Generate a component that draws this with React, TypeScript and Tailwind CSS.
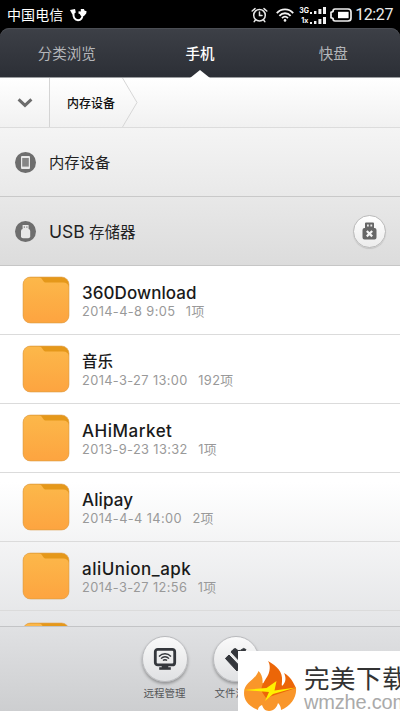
import React from 'react';

interface FolderItem {
  name: string;
  date: string;
  count: string;
  nameClass: string;
}

const folders: FolderItem[] = [
  { name: '360Download', date: '2014-4-8 9:05', count: '1项', nameClass: 'text-[17px] tracking-[0.08px]' },
  { name: '音乐', date: '2014-3-27 13:00', count: '192项', nameClass: 'text-[15.5px]' },
  { name: 'AHiMarket', date: '2013-9-23 13:32', count: '1项', nameClass: 'text-[17px] tracking-[0.5px]' },
  { name: 'Alipay', date: '2014-4-4 14:00', count: '2项', nameClass: 'text-[17px] tracking-[0.1px]' },
  { name: 'aliUnion_apk', date: '2014-3-27 12:56', count: '1项', nameClass: 'text-[17px] tracking-[0.5px]' },
];

const FolderIcon: React.FC = () => (
  <svg width="48" height="48" viewBox="0 0 48 48" className="shrink-0">
    <defs>
      <linearGradient id="folder" x1="0" y1="0" x2="0" y2="1">
        <stop offset="0" stopColor="#fcb84a" />
        <stop offset="1" stopColor="#fda440" />
      </linearGradient>
    </defs>
    <rect x="1" y="1" width="46" height="46" rx="7.5" fill="#e5981a" />
    <path
      d="M8.5 1.4H17C18.8 1.4 19.4 2.2 20.4 3.8C21.6 5.8 22.4 6.6 24.3 6.6H41C44.5 6.6 46.4 8.2 46.8 11V39.5C46.8 44 44 46.8 39.5 46.8H8.5C4 46.8 1.2 44 1.2 39.5V8.5C1.2 4 4 1.4 8.5 1.4Z"
      fill="url(#folder)"
    />
    <rect x="1" y="1" width="46" height="46" rx="7.5" fill="none" stroke="#e0a458" strokeOpacity="0.6" />
  </svg>
);

const SignalBars: React.FC = () => (
  <svg width="17" height="7" viewBox="0 0 17 7" fill="#f2f2f2">
    <rect x="0" y="5" width="2" height="2" />
    <rect x="4" y="4" width="2.4" height="3" />
    <rect x="8.4" y="2" width="3" height="5" />
    <rect x="13" y="0" width="3" height="7" />
  </svg>
);

const StatusBar: React.FC = () => (
  <div className="flex h-7 items-center bg-black px-[7px] pt-0.5 text-white">
    <span className="text-[14px] leading-none tracking-[0.1px]">中国电信</span>
    <svg width="18" height="16" viewBox="0 0 18 16" className="ml-1.5">
      <path d="M4.5 6C4 10.5 6 13.2 9 13.2C12 13.2 13.6 10.8 13.4 8" fill="none" stroke="#fff" strokeWidth="2" />
      <path d="M1 3L6 2L6.8 5.4L3.4 7.6Z" fill="#fff" />
      <path d="M9.6 4.2L11.8 4.4V2H15L15.4 3.6L17.6 4.2L17.2 6.6L15 9H12L10.8 7L9.4 6.4Z" fill="#fff" />
    </svg>
    <div className="ml-auto flex items-center">
      <svg width="18" height="16" viewBox="0 0 18 16" fill="none" stroke="#e8e8e8" strokeWidth="1.5" strokeLinecap="round">
        <circle cx="8.5" cy="8.2" r="5.8" />
        <path d="M8.5 5V8.5H11M1.2 4L4 1.6M13 1.6L15.8 4M4.4 13L3.2 14.6M12.6 13L13.8 14.6" />
      </svg>
      <svg width="18" height="14" viewBox="0 0 18 14" fill="none" stroke="#f2f2f2" strokeWidth="1.8" className="ml-[7px]">
        <path d="M0.8 5.2C5.2 0.2 12.8 0.2 17.2 5.2" />
        <path d="M3.4 7.8C6.4 4.4 11.6 4.4 14.6 7.8" />
        <path d="M6 10.2C7.8 8.2 10.2 8.2 12 10.2" />
        <circle cx="9" cy="12.4" r="1.3" fill="#f2f2f2" stroke="none" />
      </svg>
      <div className="ml-[5px] flex w-7 flex-col gap-[3px]">
        <div className="flex h-[7px] items-end">
          <span className="w-[11px] font-['Inter'] text-[7px] font-bold leading-[7px]">3G</span>
          <SignalBars />
        </div>
        <div className="flex h-[7px] items-end">
          <span className="w-[11px] pl-0.5 font-['Inter'] text-[7px] font-bold leading-[7px]">1x</span>
          <SignalBars />
        </div>
      </div>
      <svg width="22" height="14" viewBox="0 0 22 14" className="ml-[3px]">
        <path d="M5 1H18C20 1 21 2 21 4V10C21 12 20 13 18 13H5C3.4 13 3 12 3 10.6L1 9.6V4.4L3 3.4C3 2 3.4 1 5 1Z" fill="none" stroke="#eee" strokeWidth="1.7" />
        <rect x="8" y="3.8" width="10.6" height="6.4" fill="#fff" />
      </svg>
      <span className="ml-[3px] font-['Roboto'] text-[16px] leading-none tracking-[-0.4px] text-[#ececec]">12:27</span>
    </div>
  </div>
);

const Tabs: React.FC = () => (
  <div className="bg-black">
    <div className="relative grid h-[50px] grid-cols-3 rounded-t-[9px] border-b border-[#9b9da0] bg-linear-to-b from-[#3d4047] to-[#2c2f36] text-center text-[14.5px] leading-[51px] text-[#b4b6ba] shadow-[inset_0_1px_0_#4b4e54]">
      <span>分类浏览</span>
      <span className="font-medium text-white">手机</span>
      <span>快盘</span>
      <svg width="20" height="8" viewBox="0 0 20 8" className="absolute -bottom-px left-[190px]">
        <path d="M0 8L10 0L20 8Z" fill="#fff" />
      </svg>
    </div>
  </div>
);

const Breadcrumb: React.FC = () => (
  <div className="flex h-[50px] items-stretch border-b border-[#dcdcdc] bg-linear-to-b from-white to-[#f1f1f1]">
    <div className="flex w-[50px] items-center justify-center border-r border-[#d4d4d4]">
      <svg width="16" height="10" viewBox="0 0 16 10" fill="none" stroke="#6c6c6c" strokeWidth="3">
        <path d="M1.6 1.4L8 7.4L14.4 1.4" />
      </svg>
    </div>
    <span className="pl-[17px] text-[12px] font-medium leading-[51px] text-[#111]">内存设备</span>
    <svg width="16" height="49" viewBox="0 0 16 49" fill="none" stroke="#d6d6d6" className="ml-[7px]">
      <path d="M0.5 0L15 24.5L0.5 49" />
    </svg>
  </div>
);

const RemoteIcon: React.FC = () => (
  <svg width="24" height="24" viewBox="0 0 24 24" fill="none" stroke="#34373c">
    <rect x="2.3" y="2.3" width="19.4" height="15.6" rx="2.5" strokeWidth="2.8" />
    <path d="M9 18H15V20.5H17.5V22.5H6.5V20.5H9Z" fill="#34373c" strokeWidth="0.6" />
    <path d="M6 9.4C9.4 5.8 14.6 5.8 18 9.4M8 11.6C10.2 9.2 13.8 9.2 16 11.6M10 13.6C11.2 12.4 12.8 12.4 14 13.6" strokeWidth="1.4" />
  </svg>
);

const CleanIcon: React.FC = () => (
  <svg width="26" height="24" viewBox="0 0 26 24" fill="#34373c" stroke="#34373c" strokeLinejoin="round">
    <path d="M2.4 11.4L6 8L17 19.5L14 24Z" />
    <path d="M8.2 5.2C8.8 3.4 11 1.4 12.6 1.6L15 3.6L17.4 3.4L20.6 1.4L23 2.6L17.4 9.6L21 16L19.6 17.6Z" />
    <path d="M6.6 5.8L19.4 18.8" stroke="#eceded" strokeWidth="1.3" />
  </svg>
);

const Action: React.FC<{ label: string; children: React.ReactNode }> = ({ label, children }) => (
  <div className="flex w-[71px] flex-col items-center">
    <div className="flex size-[46px] items-center justify-center rounded-full border border-[#b9babd] bg-linear-to-b from-[#fafafa] to-[#e0e1e3] shadow-[0_2px_3px_rgba(0,0,0,0.3)]">
      {children}
    </div>
    <span className="mt-[5px] text-[10.5px] leading-[14px] text-[#55575a]">{label}</span>
  </div>
);

const Watermark: React.FC = () => (
  <div className="absolute bottom-0 right-0 flex h-[60px] w-[162px] overflow-hidden bg-white">
    <svg width="54" height="51" viewBox="0 0 54 51" className="ml-1.5 mt-[9px] shrink-0">
      <path d="M14 50C4 46 0 40 0 33C0 22 11 21 14.5 11C17.5 14 19 18 18.5 23L52 28C53 37 47 46 37 50C37 47 36 45 34 43C33 47 30 51 25 51C21 51 19 48 18 45C15 46 14 48 14 50Z" fill="#f9962a" />
      <path d="M18 32C16 25 22 20 24.5 14C26.5 9 26 4 24 1C33 6 39 12 38 21C38 23 37.5 24.5 38 26C42.5 22 42 17 40 13C47 17 49 22 52 28L34 34L22 38Z" fill="#ec6608" />
      <path d="M0 30L22.5 28L32.5 21L30.5 30.5L52 27.5L29 34L21 41L25 32Z" fill="#fff100" />
    </svg>
    <div className="ml-[6px] whitespace-nowrap">
      <div className="mt-[14px] h-[29px] text-[25.5px] leading-[28px] tracking-[0.5px] text-[#333]">完美下载</div>
      <div className="font-['Liberation_Sans'] text-[20px] leading-[17px] tracking-[-0.2px] text-[#aaa]">wmzhe.com</div>
    </div>
  </div>
);

const App: React.FC = () => {
  return (
    <div className="relative flex h-[711px] w-[400px] flex-col overflow-hidden bg-white font-['Inter','Noto_Sans_CJK_SC',sans-serif]">
      <StatusBar />
      <Tabs />
      <Breadcrumb />

      {/* Storage devices */}
      <div className="flex h-[69px] items-center border-b border-[#c9c9c9] bg-linear-to-b from-[#f4f4f4] to-[#e9e9e9] pl-[15px]">
        <svg width="21" height="21" viewBox="0 0 21 21">
          <circle cx="10.5" cy="10.5" r="10.5" fill="#6e6e6e" />
          <rect x="6" y="4" width="9" height="13" rx="1" fill="#e8e8e8" />
          <rect x="7.2" y="6" width="6.6" height="8.6" fill="#858585" />
        </svg>
        <span className="ml-[13px] pt-[3px] text-[15.3px] text-[#222]">内存设备</span>
      </div>
      <div className="flex h-[69px] items-center border-b border-[#c6c6c6] bg-linear-to-b from-[#e8e8e8] to-[#dcdcdc] pl-[15px] pr-3.5">
        <svg width="21" height="21" viewBox="0 0 21 21">
          <circle cx="10.5" cy="10.5" r="10.5" fill="#6e6e6e" />
          <rect x="7.6" y="4" width="6" height="5" fill="#e8e8e8" />
          <rect x="6" y="8" width="9.2" height="9.2" rx="2" fill="#e8e8e8" />
          <path d="M9.3 5.4V6.8M11.9 5.4V6.8" stroke="#6e6e6e" />
        </svg>
        <span className="ml-[13px] pt-[3px] text-[15.5px] text-[#222]">
          <span className="text-[17.5px]">USB</span> 存储器
        </span>
        <div className="ml-auto flex size-[33px] items-center justify-center rounded-full border border-[#bababa] bg-linear-to-b from-white to-[#ececec] shadow-[0_1px_1px_rgba(0,0,0,0.12)]">
          <svg width="15" height="18" viewBox="0 0 15 18">
            <path d="M3 1.5Q3 0.5 4 0.5H11Q12 0.5 12 1.5V6H12.5Q14.5 6 14.5 8V15.5Q14.5 17.5 12.5 17.5H2.5Q0.5 17.5 0.5 15.5V8Q0.5 6 2.5 6H3Z" fill="#666" />
            <path d="M5 2.5H6.8V4.5H5ZM8.4 2.5H10.2V4.5H8.4Z" fill="#e8e8e8" />
            <path d="M4.8 9L10.2 14.4M10.2 9L4.8 14.4" stroke="#f4f4f4" strokeWidth="2.2" />
          </svg>
        </div>
      </div>

      {/* Folder list */}
      <div className="h-[360px] overflow-hidden bg-linear-to-b from-white from-60% to-[#e4e5e7]">
        {folders.map((f) => (
          <div key={f.name} className="flex h-[69px] items-center border-b border-[#dbdbdb] pl-[22px]">
            <FolderIcon />
            <div className="ml-3 pt-[3px]">
              <div className={`font-medium leading-5 text-[#1a1a1a] ${f.nameClass}`}>{f.name}</div>
              <div className="flex gap-[10.5px] text-[12.8px] leading-[18px] tracking-[0.38px] text-[#999]">
                <span>{f.date}</span>
                <span>{f.count}</span>
              </div>
            </div>
          </div>
        ))}
        <div className="flex h-[69px] items-center pl-[22px]">
          <FolderIcon />
        </div>
      </div>

      {/* Bottom toolbar */}
      <div className="flex flex-1 border-t border-[#c3c4c6] bg-linear-to-b from-[#e0e1e3] to-[#cdced0] pl-[129px] pt-[9px]">
        <Action label="远程管理">
          <RemoteIcon />
        </Action>
        <Action label="文件清理">
          <CleanIcon />
        </Action>
      </div>

      <Watermark />
    </div>
  );
};

export default App;
